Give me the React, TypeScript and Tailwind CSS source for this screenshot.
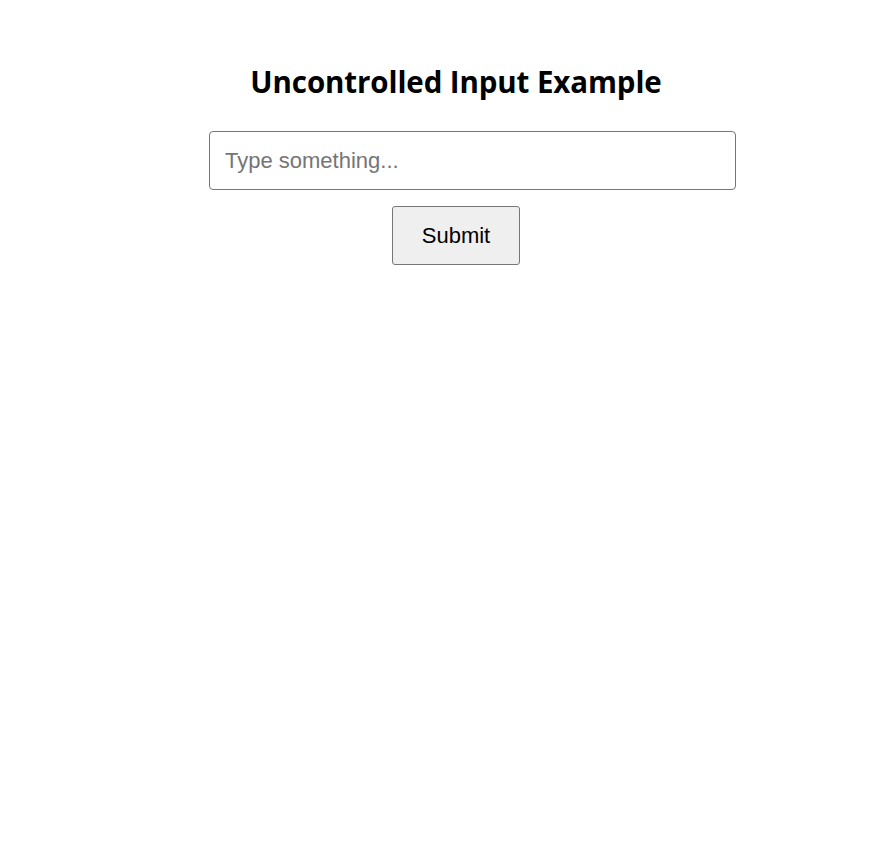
export default function App() {
  return (
    <div className="min-h-screen bg-white pl-6 pt-[60px] flex flex-col items-center">
      <h1 className="text-[29.5px] leading-[44px] font-bold text-black [font-family:'Open_Sans','Noto_Sans',sans-serif] tracking-[-0.1px]">
        Uncontrolled Input Example
      </h1>
      <div className="w-[494px] mt-[27px] flex flex-col">
        <input
          type="text"
          placeholder="Type something..."
          className="w-[527px] h-[59px] px-[15px] border border-[#767676] rounded-[4px] text-[22px] text-black placeholder:text-[#757575] [font-family:'Liberation_Sans',Arial,sans-serif] outline-none"
        />
      </div>
      <button className="mt-4 w-[128px] h-[59px] bg-[#efefef] border border-[#767676] rounded-[3px] text-[22px] text-black [font-family:'Liberation_Sans',Arial,sans-serif]">
        Submit
      </button>
    </div>
  );
}
